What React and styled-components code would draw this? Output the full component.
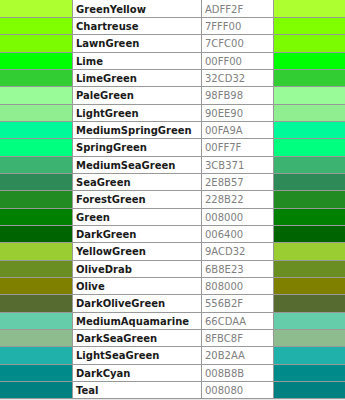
import React from 'react';
import styled, { createGlobalStyle } from 'styled-components';

const colors = [
  ['GreenYellow', 'ADFF2F'],
  ['Chartreuse', '7FFF00'],
  ['LawnGreen', '7CFC00'],
  ['Lime', '00FF00'],
  ['LimeGreen', '32CD32'],
  ['PaleGreen', '98FB98'],
  ['LightGreen', '90EE90'],
  ['MediumSpringGreen', '00FA9A'],
  ['SpringGreen', '00FF7F'],
  ['MediumSeaGreen', '3CB371'],
  ['SeaGreen', '2E8B57'],
  ['ForestGreen', '228B22'],
  ['Green', '008000'],
  ['DarkGreen', '006400'],
  ['YellowGreen', '9ACD32'],
  ['OliveDrab', '6B8E23'],
  ['Olive', '808000'],
  ['DarkOliveGreen', '556B2F'],
  ['MediumAquamarine', '66CDAA'],
  ['DarkSeaGreen', '8FBC8F'],
  ['LightSeaGreen', '20B2AA'],
  ['DarkCyan', '008B8B'],
  ['Teal', '008080'],
];

const GlobalStyle = createGlobalStyle`
  html {
    background: #e6e6e6;
  }
  body {
    margin: 0;
    font-family: "DejaVu Sans", Verdana, sans-serif;
  }
`;

const Table = styled.div`
  display: grid;
  grid-template-columns: 72px 129px 72px 72px;
  grid-template-rows: 18px repeat(${colors.length - 1}, calc(52px / 3));
  width: 345px;
`;

const Row = styled.div`
  display: contents;
`;

const Cell = styled.div`
  display: flex;
  align-items: center;
  border-bottom: 1px solid #999;
  overflow: hidden;
  white-space: nowrap;
`;

const Swatch = styled(Cell)`
  background: ${props => props.$color};
  border-left: ${props => (props.$edge ? 'none' : '1px solid #999')};
`;

const TextCell = styled(Cell)`
  background: #fff;
  border-left: 1px solid #999;
  padding: 2px 0 0 3px;
  font-size: 10px;
  line-height: 12px;
`;

const Name = styled(TextCell)`
  font-weight: bold;
  color: #1a1a1a;
`;

const Hex = styled(TextCell)`
  color: #808080;
`;

const App = () => (
  <>
    <GlobalStyle />
    <Table>
      {colors.map(([name, hex]) => (
        <Row key={name}>
          <Swatch $color={`#${hex}`} $edge />
          <Name>{name}</Name>
          <Hex>{hex}</Hex>
          <Swatch $color={`#${hex}`} />
        </Row>
      ))}
    </Table>
  </>
);

export default App;
